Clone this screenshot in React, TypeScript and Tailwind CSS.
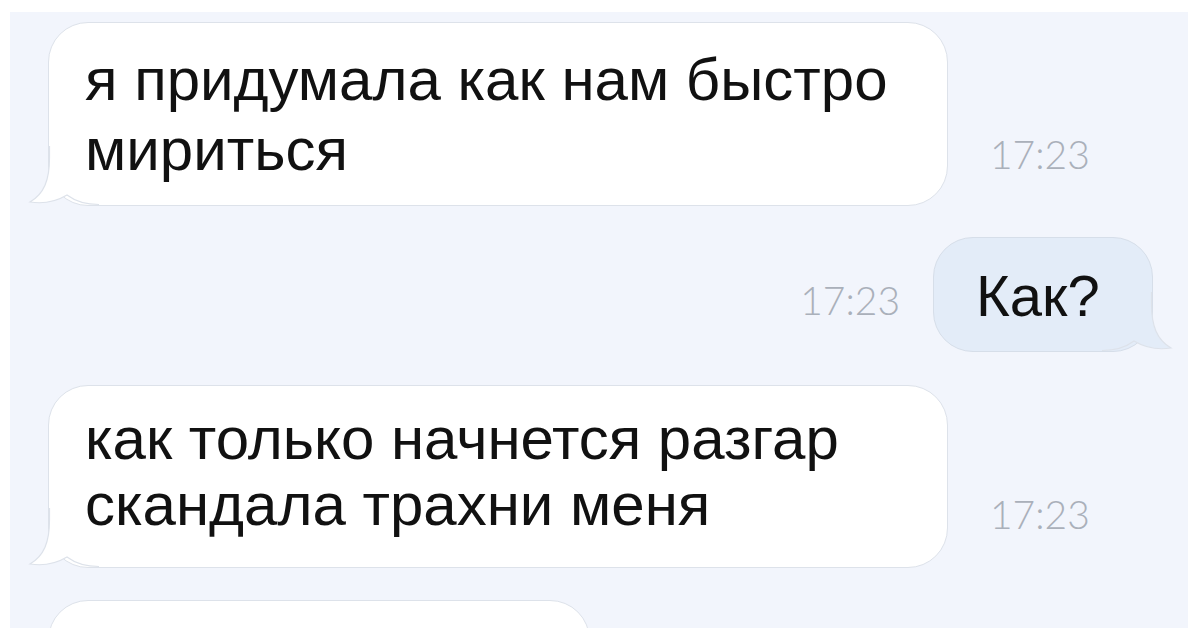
import React from 'react';

const BORDER = '#dde2ea';

function Tail({ fill, side }: { fill: string; side: 'left' | 'right' }) {
  return (
    <svg
      width="72"
      height="60"
      viewBox="0 0 72 60"
      className={`absolute bottom-[-1px] ${side === 'left' ? 'left-[-22px]' : 'right-[-22px] -scale-x-100'}`}
    >
      <path
        d="M22.5,0 L22.5,12 C22.5,34 17,48 3,56 C16,58 30,55 40,49 C48,55 58,58.5 72,58.5 L72,0 Z"
        fill={fill}
      />
      <path
        d="M22.5,0 L22.5,12 C22.5,34 17,48 3,56 C16,58 30,55 40,49 C48,55 58,58.5 72,58.5"
        fill="none"
        stroke={BORDER}
        strokeWidth="1.2"
      />
    </svg>
  );
}

function Time({ className = '' }: { className?: string }) {
  return (
    <span className={`font-['Lato','Liberation_Sans',sans-serif] font-light text-[39px] leading-none text-[#aab0ba] ${className}`}>
      17:23
    </span>
  );
}

export default function App() {
  return (
    <div className="w-[1200px] h-[628px] bg-white pl-[10px] pt-[12px] pr-[12px] overflow-hidden">
      <div className="h-full bg-[#f2f5fc] overflow-hidden flex flex-col font-['Liberation_Sans','Arial',sans-serif] text-[#111]">
        {/* incoming */}
        <div className="flex items-end mt-[10px]">
          <div className="relative ml-[38px] w-[900px] h-[184px] bg-white border border-[#dde2ea] rounded-[40px] pl-[36px] pt-[22px] text-[60px] leading-[70px]">
            <Tail fill="#ffffff" side="left" />
            <div className="relative">
              <p>я придумала как нам быстро</p>
              <p>мириться</p>
            </div>
          </div>
          <Time className="ml-[42px] mb-[32px]" />
        </div>

        {/* outgoing */}
        <div className="flex items-center justify-end mt-[31px] mr-[35px]">
          <Time className="mr-[33px] mt-[12px]" />
          <div className="relative w-[220px] h-[115px] bg-[#e3ecf8] border border-[#d6dee9] rounded-[40px] flex items-center pl-[42px] pt-[2px] text-[58px]">
            <Tail fill="#e3ecf8" side="right" />
            <span className="relative">Как?</span>
          </div>
        </div>

        {/* incoming */}
        <div className="flex items-end mt-[33px]">
          <div className="relative ml-[38px] w-[900px] h-[183px] bg-white border border-[#dde2ea] rounded-[40px] pl-[36px] pt-[20px] text-[60px] leading-[66px]">
            <Tail fill="#ffffff" side="left" />
            <div className="relative">
              <p>как только начнется разгар</p>
              <p>скандала трахни меня</p>
            </div>
          </div>
          <Time className="ml-[42px] mb-[34px]" />
        </div>

        {/* next, cut off */}
        <div className="flex mt-[32px]">
          <div className="ml-[38px] w-[542px] h-[120px] shrink-0 bg-white border border-[#dde2ea] rounded-[40px]" />
        </div>
      </div>
    </div>
  );
}
